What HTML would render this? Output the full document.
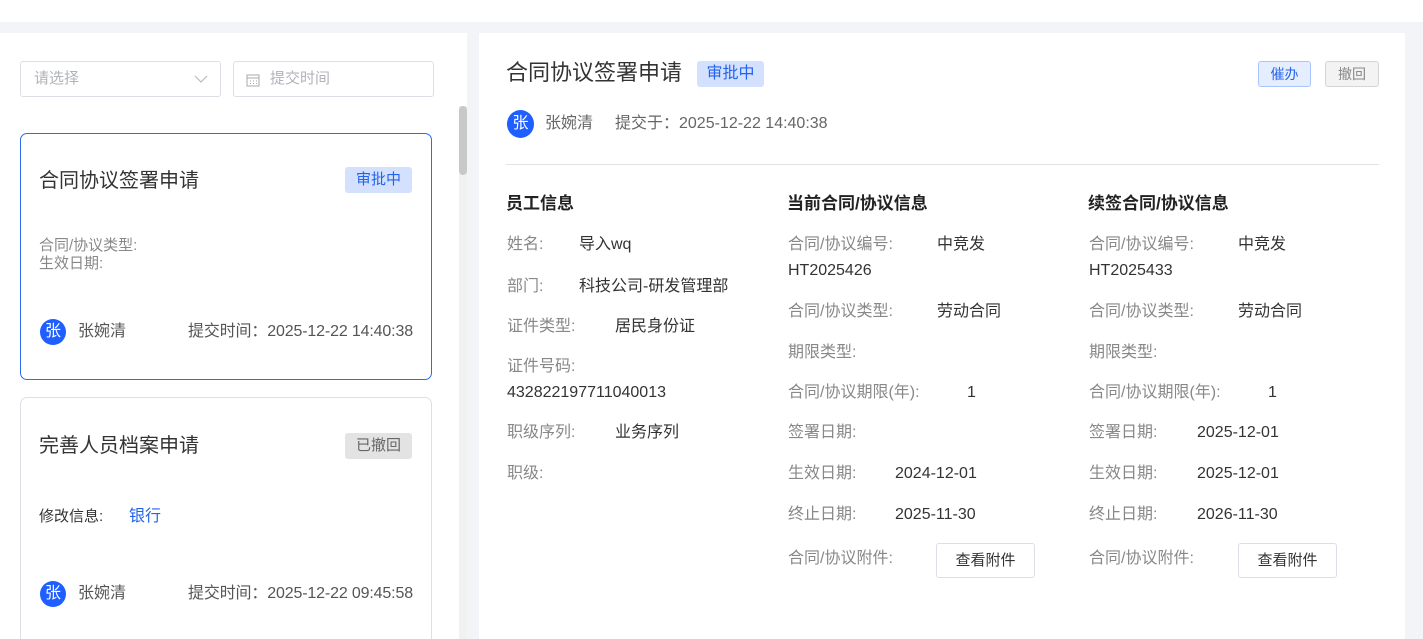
<!DOCTYPE html>
<html><head><meta charset="utf-8"><style>
*{margin:0;padding:0;box-sizing:border-box}
html{width:1423px;height:639px;overflow:hidden}
body{width:1423px;height:639px;overflow:hidden;background:#f3f4f8;font-family:"Liberation Sans","Noto Sans CJK SC",sans-serif;position:relative;color:#333}
.a{position:absolute;white-space:nowrap;line-height:22px}
.top{left:0;top:0;width:1423px;height:22px;background:#fff}
.lp{left:0;top:33px;width:467px;height:606px;background:#fff}
.rp{left:479px;top:33px;width:926px;height:606px;background:#fff}
.inp{border:1px solid #dcdfe6;border-radius:3px;height:36px;background:#fff;font-size:15px;color:#b0b3b9;line-height:34px}
.card{left:20px;width:412px;border:1px solid #dcdfe6;border-radius:7px;background:#fff}
.tag{font-size:15px;border-radius:3px;width:67px;text-align:center;height:26px;line-height:26px}
.blue{background:#d3e1ff;color:#2463eb}
.grey{background:#e3e3e3;color:#666}
.av{width:26px;height:26px;border-radius:50%;background:#1f5eff;color:#fff;font-size:16px;text-align:center;line-height:26px}
.g{color:#888;font-size:16px}
.v{color:#333;font-size:16px}
.h{font-size:17px;font-weight:bold;color:#222}
.btn{border:1px solid #dcdfe6;border-radius:3px;background:#fff;font-size:15px;color:#333;text-align:center;width:99px;height:35px;line-height:33px}
</style></head><body>
<div class="a top"></div>
<div class="a lp"></div>
<div class="a rp"></div>
<div class="a" style="left:459px;top:106px;width:8px;height:533px;background:#f1f1f1"></div>
<div class="a" style="left:459px;top:106px;width:8px;height:69px;background:#c8c8c8;border-radius:4px"></div>

<div class="a inp" style="left:20px;top:61px;width:201px;padding-left:13px;line-height:34px">请选择<svg style="position:absolute;right:12px;top:13px" width="14" height="8"><path d="M1 1l6 6 6-6" fill="none" stroke="#bbb" stroke-width="1.2"/></svg></div>
<div class="a inp" style="left:233px;top:61px;width:201px;padding-left:36px;line-height:34px"><svg style="position:absolute;left:12px;top:11px" width="14" height="14"><rect x="1" y="2" width="12" height="11" fill="none" stroke="#aaa"/><path d="M1 5h12M4 8h1M7 8h1M10 8h1M4 10.5h1M7 10.5h1M10 10.5h1" stroke="#aaa"/></svg>提交时间</div>

<div class="a card" style="top:133px;height:247px;border-color:#2f6bf2"></div>
<div class="a" style="left:39px;top:168px;font-size:20px;color:#333;line-height:26px">合同协议签署申请</div>
<div class="a tag blue" style="left:345px;top:167px;line-height:26px">审批中</div>
<div class="a" style="left:39px;top:237px;font-size:15px;color:#888;line-height:18px">合同/协议类型:<br>生效日期:</div>
<div class="a av" style="left:40px;top:319px;line-height:26px">张</div>
<div class="a" style="left:78px;top:321px;font-size:16px;color:#555">张婉清</div>
<div class="a" style="left:188px;top:321px;font-size:16px;color:#555;letter-spacing:-0.15px">提交时间：2025-12-22 14:40:38</div>

<div class="a card" style="top:397px;height:260px"></div>
<div class="a" style="left:39px;top:433px;font-size:20px;color:#333;line-height:26px">完善人员档案申请</div>
<div class="a tag grey" style="left:345px;top:433px;line-height:26px">已撤回</div>
<div class="a" style="left:39px;top:506px;font-size:15px;color:#333">修改信息:</div>
<div class="a" style="left:129px;top:506px;font-size:16px;color:#2463eb">银行</div>
<div class="a av" style="left:40px;top:581px;line-height:26px">张</div>
<div class="a" style="left:78px;top:583px;font-size:16px;color:#555">张婉清</div>
<div class="a" style="left:188px;top:583px;font-size:16px;color:#555;letter-spacing:-0.15px">提交时间：2025-12-22 09:45:58</div>

<div class="a" style="left:506px;top:59px;font-size:22px;color:#333;line-height:28px">合同协议签署申请</div>
<div class="a tag blue" style="left:697px;top:61px;font-size:16px;line-height:26px">审批中</div>
<div class="a" style="left:1258px;top:61px;width:53px;height:26px;border:1px solid #a9c5ff;background:#e5eeff;border-radius:3px;color:#2463eb;font-size:14px;text-align:center;line-height:24px">催办</div>
<div class="a" style="left:1325px;top:61px;width:54px;height:26px;border:1px solid #d5d5d5;background:#f3f3f3;border-radius:3px;color:#888;font-size:14px;text-align:center;line-height:24px">撤回</div>
<div class="a av" style="left:507px;top:110px;width:27px;height:28px;line-height:28px">张</div>
<div class="a" style="left:545px;top:113px;font-size:16px;color:#666">张婉清</div>
<div class="a" style="left:615px;top:113px;font-size:16px;color:#666">提交于：2025-12-22 14:40:38</div>
<div class="a" style="left:506px;top:164px;width:873px;height:1px;background:#e2e2e2"></div>

<div class="a h" style="left:506px;top:193px">员工信息</div>
<div class="a g" style="left:507px;top:234px">姓名:</div><div class="a v" style="left:579px;top:234px">导入wq</div>
<div class="a g" style="left:507px;top:276px">部门:</div><div class="a v" style="left:579px;top:276px">科技公司-研发管理部</div>
<div class="a g" style="left:507px;top:316px">证件类型:</div><div class="a v" style="left:615px;top:316px">居民身份证</div>
<div class="a g" style="left:507px;top:356px">证件号码:</div><div class="a v" style="left:507px;top:382px">432822197711040013</div>
<div class="a g" style="left:507px;top:422px">职级序列:</div><div class="a v" style="left:615px;top:422px">业务序列</div>
<div class="a g" style="left:507px;top:463px">职级:</div>

<div class="a h" style="left:787px;top:193px">当前合同/协议信息</div>
<div class="a g" style="left:788px;top:234px">合同/协议编号:</div><div class="a v" style="left:937px;top:234px">中竞发</div>
<div class="a v" style="left:788px;top:260px">HT2025426</div>
<div class="a g" style="left:788px;top:301px">合同/协议类型:</div><div class="a v" style="left:937px;top:301px">劳动合同</div>
<div class="a g" style="left:788px;top:342px">期限类型:</div>
<div class="a g" style="left:788px;top:382px">合同/协议期限(年):</div><div class="a v" style="left:967px;top:382px">1</div>
<div class="a g" style="left:788px;top:422px">签署日期:</div>
<div class="a g" style="left:788px;top:463px">生效日期:</div><div class="a v" style="left:895px;top:463px">2024-12-01</div>
<div class="a g" style="left:788px;top:504px">终止日期:</div><div class="a v" style="left:895px;top:504px">2025-11-30</div>
<div class="a g" style="left:788px;top:548px">合同/协议附件:</div><div class="a btn" style="left:936px;top:543px;line-height:33px">查看附件</div>

<div class="a h" style="left:1088px;top:193px">续签合同/协议信息</div>
<div class="a g" style="left:1089px;top:234px">合同/协议编号:</div><div class="a v" style="left:1238px;top:234px">中竞发</div>
<div class="a v" style="left:1089px;top:260px">HT2025433</div>
<div class="a g" style="left:1089px;top:301px">合同/协议类型:</div><div class="a v" style="left:1238px;top:301px">劳动合同</div>
<div class="a g" style="left:1089px;top:342px">期限类型:</div>
<div class="a g" style="left:1089px;top:382px">合同/协议期限(年):</div><div class="a v" style="left:1268px;top:382px">1</div>
<div class="a g" style="left:1089px;top:422px">签署日期:</div><div class="a v" style="left:1197px;top:422px">2025-12-01</div>
<div class="a g" style="left:1089px;top:463px">生效日期:</div><div class="a v" style="left:1197px;top:463px">2025-12-01</div>
<div class="a g" style="left:1089px;top:504px">终止日期:</div><div class="a v" style="left:1197px;top:504px">2026-11-30</div>
<div class="a g" style="left:1089px;top:548px">合同/协议附件:</div><div class="a btn" style="left:1238px;top:543px;line-height:33px">查看附件</div>
</body></html>
